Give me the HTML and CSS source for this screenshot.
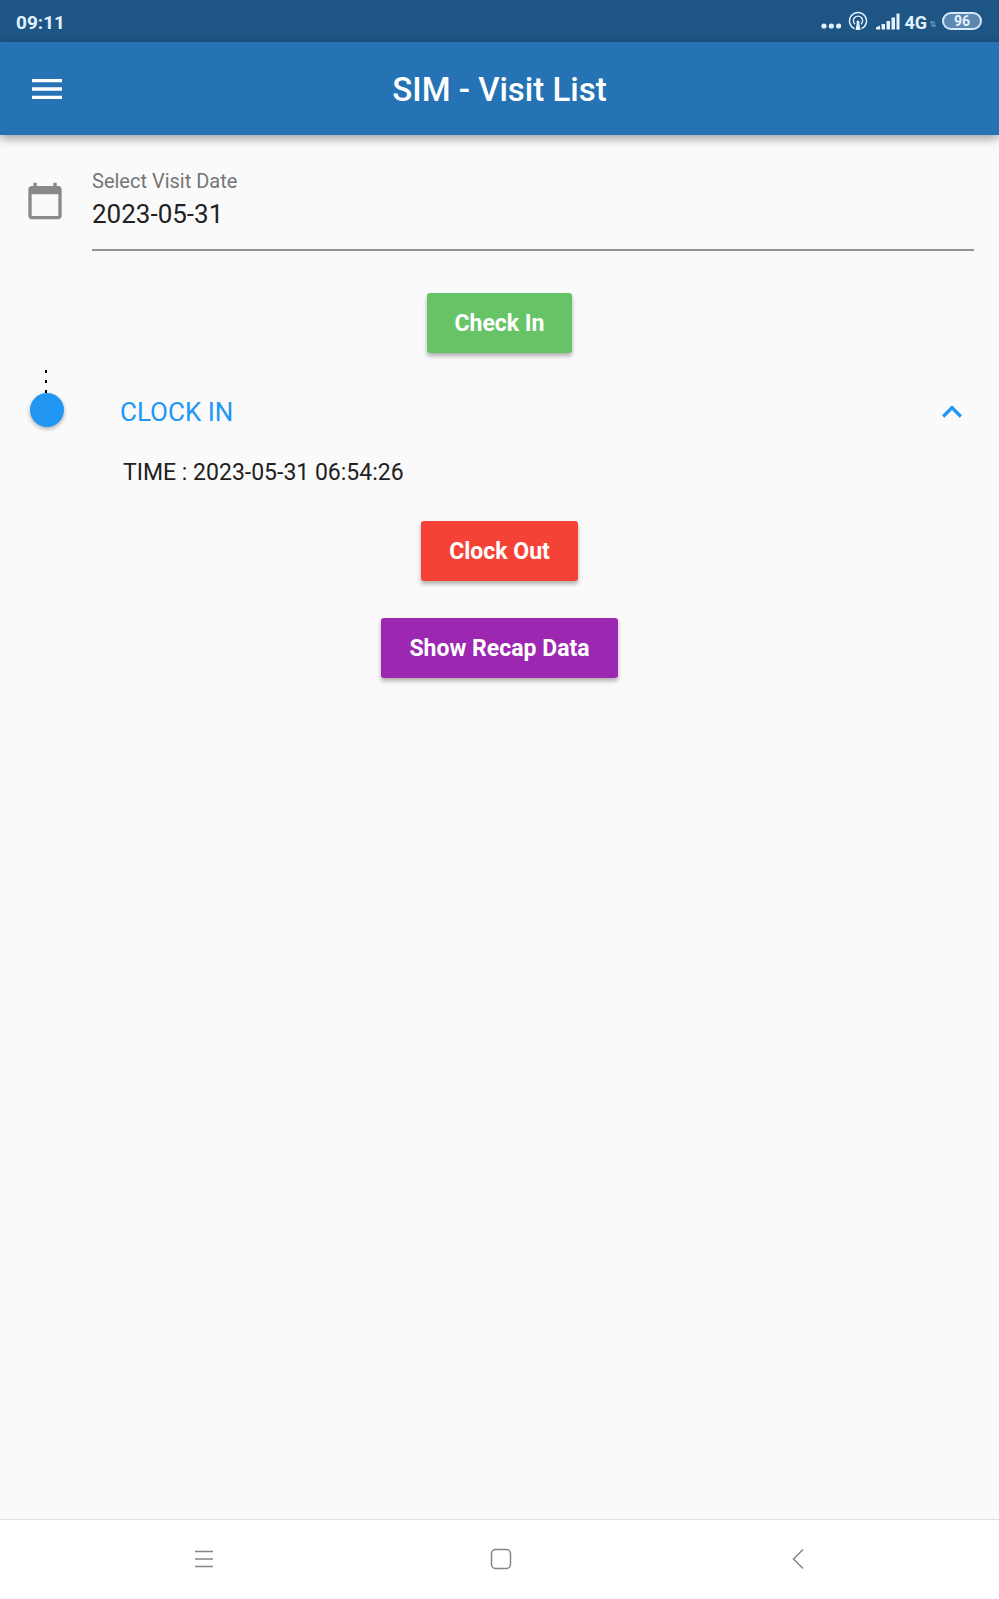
FILE: index.html
```html
<!DOCTYPE html>
<html lang="en">
<head>
<meta charset="utf-8">
<meta name="viewport" content="width=device-width, initial-scale=1">
<title>SIM - Visit List</title>
<link rel="stylesheet" href="styles.css">
</head>
<body>
<div class="status-bar">
  <span class="clock">09:11</span>
  <div class="indicators">
    <svg class="dots" viewBox="0 0 20 20" aria-hidden="true"><circle cx="3" cy="15" r="2.600"/><circle cx="10.300" cy="15" r="2.600"/><circle cx="17.600" cy="15" r="2.600"/></svg>
    <svg class="hotspot" viewBox="0 0 20 20" aria-hidden="true"><path d="M6.500 17.700A8.500 8.500 0 1 1 13.500 17.700M7 13.200A4.600 4.600 0 1 1 13 13.200" fill="none" stroke="currentColor" stroke-width="1.400"/><path d="M10 9.500a1.500 1.500 0 0 1 1.200 2.400L12.500 19h-5l1.300-7.100A1.500 1.500 0 0 1 10 9.500z"/></svg>
    <svg class="signal" viewBox="0 0 24 18" aria-hidden="true"><path d="M0 17.500v-2l4-2v4zM5.500 12H9v5.500H5.500zM10.500 9H14v8.500h-3.500zM15.500 5.500H19v12h-3.500zM20.500 1.500h3v16h-3z"/></svg>
    <span class="network">4G</span>
    <svg class="traffic" viewBox="0 0 6 8" aria-hidden="true"><path d="M0 3l2-2v6M4 1v6l2-2" fill="none" stroke="currentColor"/></svg>
    <span class="battery">96</span>
  </div>
</div>
<header class="app-bar">
  <button class="icon-button" type="button" aria-label="Open menu">
    <svg class="icon" viewBox="0 0 24 24" aria-hidden="true"><path d="M3 18h18v-2H3v2zm0-5h18v-2H3v2zm0-7v2h18V6H3z"/></svg>
  </button>
  <h1 class="title">SIM - Visit List</h1>
</header>
<main class="content">
  <div class="date-row">
    <svg class="icon calendar" viewBox="0 0 24 24" aria-hidden="true"><path d="M20 3h-1V1h-2v2H7V1H5v2H4c-1.100 0-2 .9-2 2v16c0 1.100.9 2 2 2h16c1.100 0 2-.9 2-2V5c0-1.100-.9-2-2-2zm0 18H4V8h16v13z"/></svg>
    <div class="field">
      <label class="field-label" for="visit-date">Select Visit Date</label>
      <input class="field-input" id="visit-date" type="text" value="2023-05-31">
    </div>
  </div>
  <button class="button check-in" type="button">Check In</button>
  <section class="timeline">
    <div class="marker" aria-hidden="true">
      <svg class="dashes" viewBox="0 0 4 23"><path d="M1 0v23" stroke="#000" stroke-width="2" stroke-dasharray="3 7"/></svg>
      <span class="dot"></span>
    </div>
    <div class="entry">
      <button class="entry-toggle" type="button" aria-expanded="true" aria-controls="clock-in-time">
        <span>CLOCK IN</span>
        <svg class="icon" viewBox="0 0 24 24" aria-hidden="true"><path d="M12 8l-6 6 1.410 1.410L12 10.830l4.590 4.580L18 14z"/></svg>
      </button>
      <p class="entry-time" id="clock-in-time">TIME : 2023-05-31 06:54:26</p>
    </div>
  </section>
  <button class="button clock-out" type="button">Clock Out</button>
  <button class="button recap" type="button">Show Recap Data</button>
</main>
<nav class="system-nav" aria-label="System">
  <button class="nav-button" type="button" aria-label="Recent apps"><svg class="nav-icon" viewBox="0 0 24 24" aria-hidden="true"><path d="M3 4.500h18M3 12h18M3 19.500h18"/></svg></button>
  <button class="nav-button" type="button" aria-label="Home"><svg class="nav-icon" viewBox="0 0 24 24" aria-hidden="true"><rect x="2.500" y="2.500" width="19" height="19" rx="4"/></svg></button>
  <button class="nav-button" type="button" aria-label="Back"><svg class="nav-icon" viewBox="0 0 24 24" aria-hidden="true"><path d="M17 2.500L7.500 12l9.500 9.500"/></svg></button>
</nav>
</body>
</html>
```

FILE: styles.css
```css
* {
  box-sizing: border-box;
}

body {
  display: flex;
  flex-direction: column;
  min-height: 100vh;
  margin: 0;
  background: #fafafa;
  color: #212121;
  font-family: Roboto, "Liberation Sans", sans-serif;
}

button,
input {
  margin: 0;
  padding: 0;
  border: 0;
  background: none;
  color: inherit;
  font: inherit;
}

button {
  cursor: pointer;
}

svg {
  display: block;
  flex: none;
  fill: currentColor;
}

.icon {
  width: 40px;
  height: 40px;
}

.status-bar {
  display: flex;
  align-items: center;
  justify-content: space-between;
  height: 42px;
  padding: 0 17px 0 16px;
  background: #1d5685;
  color: #e4f2ff;
}

.clock {
  padding-top: 2px;
  font-size: 19px;
  font-weight: 700;
}

.indicators {
  display: flex;
  align-items: center;
}

.dots {
  width: 20px;
  height: 20px;
  margin-right: 7px;
}

.hotspot {
  width: 20px;
  height: 20px;
  margin-right: 8px;
}

.signal {
  width: 24px;
  height: 18px;
  margin-right: 4px;
}

.network {
  padding-top: 2px;
  font-size: 18px;
  font-weight: 700;
}

.traffic {
  width: 6px;
  height: 8px;
  margin: 6px 6px 0 3px;
  opacity: 0.5;
}

.battery {
  width: 40px;
  height: 18px;
  border: 2px solid #d4e8f8;
  border-radius: 9px;
  background: #5b88b0;
  font-size: 14px;
  font-weight: 700;
  line-height: 15px;
  text-align: center;
}

.app-bar {
  display: grid;
  grid-template-columns: 40px 1fr 40px;
  align-items: center;
  height: 93px;
  padding: 0 27px;
  background: #2573b5;
  color: #fff;
  box-shadow: 0 3px 10px rgba(0, 0, 0, 0.4);
}

.title {
  margin: 0;
  padding-top: 2px;
  font-size: 33px;
  font-weight: 500;
  text-align: center;
}

.content {
  display: flex;
  flex: 1;
  flex-direction: column;
  align-items: center;
  padding: 34px 25px;
}

.date-row {
  display: flex;
  align-items: flex-start;
  gap: 27px;
  width: 100%;
}

.calendar {
  margin-top: 12px;
  color: #8a8a8a;
}

.field {
  display: flex;
  flex: 1;
  flex-direction: column;
  border-bottom: 2px solid #949494;
}

.field-label {
  color: #757575;
  font-size: 20px;
  line-height: 24px;
}

.field-input {
  width: 100%;
  height: 56px;
  padding-bottom: 14px;
  font-size: 26px;
}

.button {
  height: 60px;
  padding: 1px 28px 0;
  border-radius: 3px;
  color: #fff;
  font-size: 23px;
  font-weight: 700;
  box-shadow: 0 3px 4px rgba(0, 0, 0, 0.3);
}

.check-in {
  margin-top: 42px;
  background: #66c466;
}

.timeline {
  display: flex;
  gap: 56px;
  width: 100%;
  margin-top: 17px;
  padding: 0 2px 0 5px;
}

.marker {
  display: flex;
  flex-direction: column;
  align-items: center;
  width: 34px;
}

.dashes {
  width: 4px;
  height: 23px;
}

.dot {
  width: 34px;
  height: 34px;
  border-radius: 50%;
  background: #2196f3;
  box-shadow: 0 2px 4px rgba(0, 0, 0, 0.3);
}

.entry {
  flex: 1;
  padding-top: 22px;
}

.entry-toggle {
  display: flex;
  align-items: center;
  justify-content: space-between;
  width: 100%;
  color: #2196f3;
  font-size: 26px;
}

.entry-time {
  margin: 25px 0 0;
  padding-left: 3px;
  font-size: 23px;
  line-height: 32px;
}

.clock-out {
  margin-top: 32px;
  background: #f44336;
}

.recap {
  margin-top: 37px;
  background: #9c27b0;
}

.system-nav {
  display: grid;
  grid-template-columns: repeat(3, 1fr);
  height: 80px;
  padding: 0 52px 2px 55px;
  border-top: 1px solid #e0e0e0;
  background: #fff;
}

.nav-button {
  display: flex;
  align-items: center;
  justify-content: center;
}

.nav-icon {
  width: 24px;
  height: 24px;
  fill: none;
  stroke: #858585;
  stroke-width: 1.5;
}
```
